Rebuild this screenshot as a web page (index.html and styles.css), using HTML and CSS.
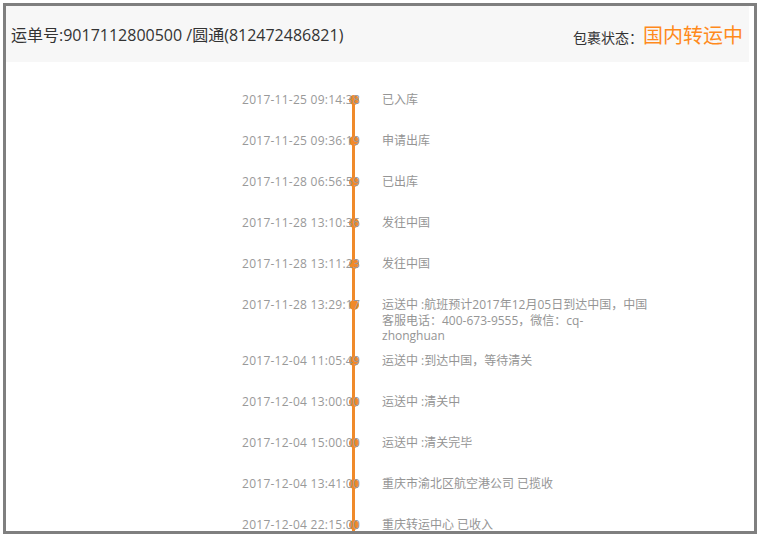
FILE: index.html
```html
<!DOCTYPE html>
<html lang="zh-CN">
<head>
    <meta charset="UTF-8">
    <title>物流跟踪</title>
    <link rel="stylesheet" href="styles.css">
</head>
<body>
    <div class="frame">
        <div class="track-head">
            <span class="waybill">运单号:9017112800500 /圆通(812472486821)</span>
            <span class="status">包裹状态：<em>国内转运中</em></span>
        </div>

        <ul class="track-list">
            <li><span class="time">2017-11-25 09:14:38</span><i class="dot"></i><span class="desc">已入库</span></li>
            <li><span class="time">2017-11-25 09:36:19</span><i class="dot"></i><span class="desc">申请出库</span></li>
            <li><span class="time">2017-11-28 06:56:59</span><i class="dot"></i><span class="desc">已出库</span></li>
            <li><span class="time">2017-11-28 13:10:36</span><i class="dot"></i><span class="desc">发往中国</span></li>
            <li><span class="time">2017-11-28 13:11:23</span><i class="dot"></i><span class="desc">发往中国</span></li>
            <li><span class="time">2017-11-28 13:29:17</span><i class="dot"></i><span class="desc">运送中 :航班预计2017年12月05日到达中国，中国客服电话：400-673-9555，微信：cq-<br>zhonghuan</span></li>
            <li><span class="time">2017-12-04 11:05:49</span><i class="dot"></i><span class="desc">运送中 :到达中国，等待清关</span></li>
            <li><span class="time">2017-12-04 13:00:00</span><i class="dot"></i><span class="desc">运送中 :清关中</span></li>
            <li><span class="time">2017-12-04 15:00:00</span><i class="dot"></i><span class="desc">运送中 :清关完毕</span></li>
            <li><span class="time">2017-12-04 13:41:00</span><i class="dot"></i><span class="desc">重庆市渝北区航空港公司 已揽收</span></li>
            <li><span class="time">2017-12-04 22:15:00</span><i class="dot"></i><span class="desc">重庆转运中心 已收入</span></li>
        </ul>
    </div>
</body>
</html>
```

FILE: styles.css
```css
body {
    margin: 0;
    font-family: "Open Sans", "Noto Sans CJK SC", sans-serif;
    background: #ffffff;
}

.frame {
    box-sizing: border-box;
    width: 754px;
    height: 531px;
    margin: 3px 0 0 3px;
    border: 3px solid #7f7f7f;
    overflow: hidden;
    background: #ffffff;
}

.track-head {
    display: flex;
    justify-content: space-between;
    align-items: center;
    height: 56px;
    margin-right: 5px;
    padding: 0 6px 0 5px;
    background: #f7f7f7;
}

.waybill {
    font-size: 16px;
    color: #333333;
}

.status {
    font-size: 14px;
    color: #333333;
}

.status em {
    font-style: normal;
    font-size: 20px;
    color: #ff8a1c;
}

.track-list {
    position: relative;
    list-style: none;
    margin: 0;
    padding: 30px 0 0 230px;
}

.track-list::before {
    content: "";
    position: absolute;
    left: 346px;
    top: 34px;
    bottom: 0;
    width: 3px;
    background: #f08a2a;
}

.track-list li {
    position: relative;
    display: flex;
    box-sizing: border-box;
    min-height: 41px;
    padding-bottom: 9px;
    font-size: 12px;
    line-height: 15.5px;
    color: #999999;
}

.time {
    position: relative;
    z-index: 1;
    width: 124px;
    flex-shrink: 0;
    text-align: right;
    letter-spacing: 0.25px;
}

.dot {
    position: absolute;
    left: 113px;
    top: 3px;
    width: 10px;
    height: 10px;
    border-radius: 50%;
    background: #f08a2a;
}

.desc {
    position: relative;
    width: 272px;
    margin-left: 22px;
    color: #959595;
}
```
